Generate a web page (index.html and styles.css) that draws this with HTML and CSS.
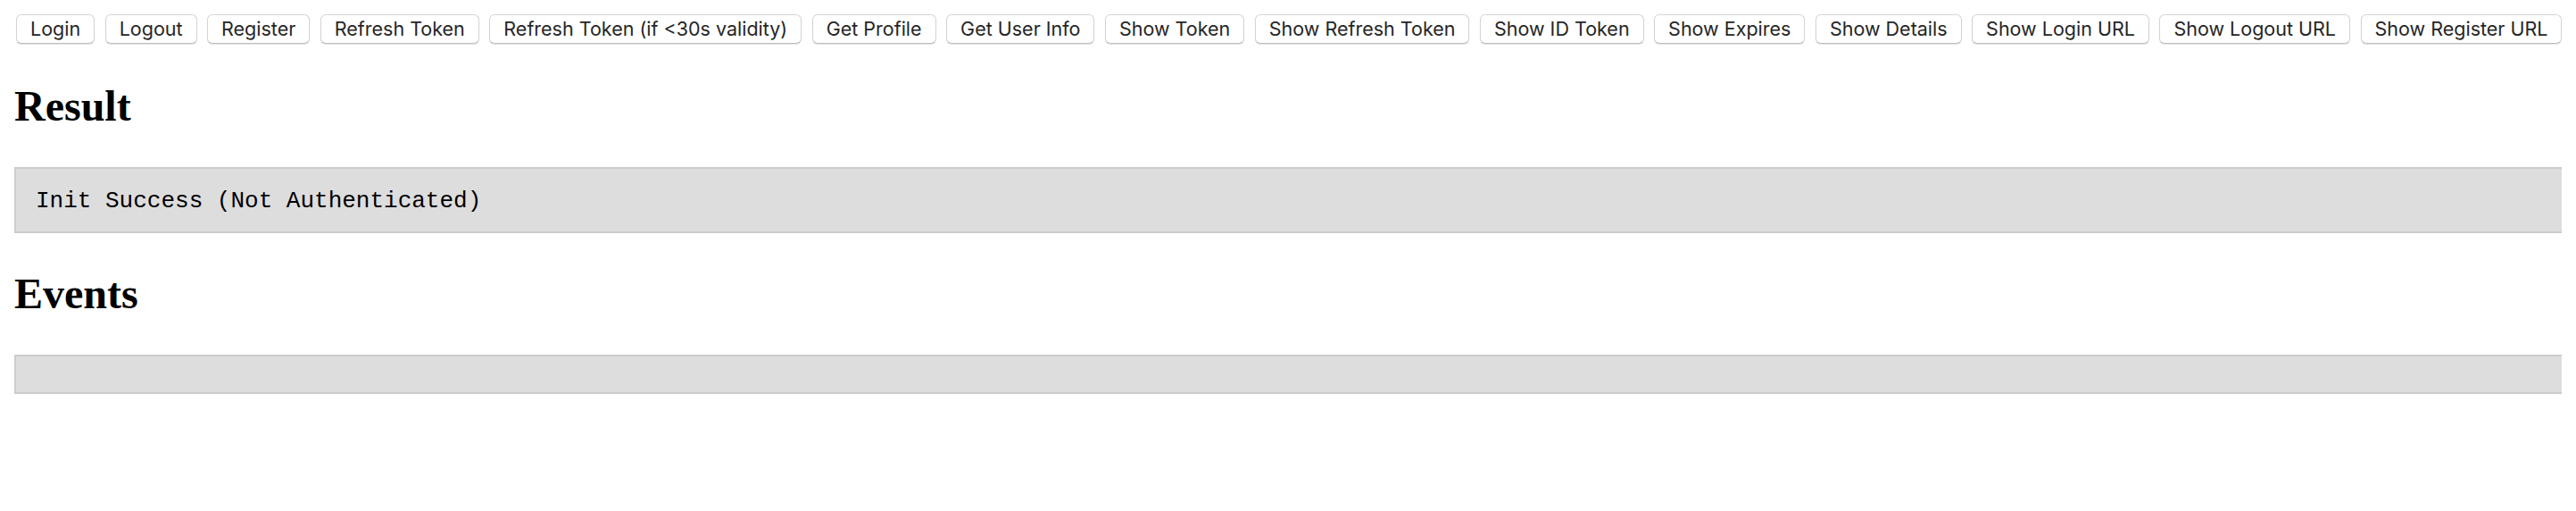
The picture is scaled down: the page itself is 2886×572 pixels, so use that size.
FILE: index.html
```html
<!DOCTYPE html>
<html lang="en">
<head>
<meta charset="utf-8">
<title>Keycloak Test</title>
<link rel="stylesheet" href="styles.css">
</head>
<body>
<div class="toolbar">
  <button class="btn">Login</button>
  <button class="btn">Logout</button>
  <button class="btn">Register</button>
  <button class="btn">Refresh Token</button>
  <button class="btn">Refresh Token (if &lt;30s validity)</button>
  <button class="btn">Get Profile</button>
  <button class="btn">Get User Info</button>
  <button class="btn">Show Token</button>
  <button class="btn">Show Refresh Token</button>
  <button class="btn">Show ID Token</button>
  <button class="btn">Show Expires</button>
  <button class="btn">Show Details</button>
  <button class="btn">Show Login URL</button>
  <button class="btn">Show Logout URL</button>
  <button class="btn">Show Register URL</button>
</div>

<h1 class="section-title">Result</h1>
<pre class="output">Init Success (Not Authenticated)</pre>

<h1 class="section-title">Events</h1>
<pre class="output"></pre>
</body>
</html>
```
FILE: styles.css
```css
html {
  background: #fff;
  overflow: hidden;
  scrollbar-width: none;
}

body {
  margin: 16px;
  color: #000;
  font-family: "Liberation Serif", "Times New Roman", serif;
}

.toolbar {
  display: flex;
  flex-wrap: nowrap;
  gap: 11.5px;
  padding-left: 2px;
  margin-bottom: 42px;
}

.btn {
  flex: none;
  height: 33px;
  padding: 0 15px;
  margin: 0;
  font-family: Inter, "Noto Sans", sans-serif;
  font-size: 21.5px;
  color: #262626;
  background: #fff;
  border: 1px solid #d4d4d4;
  border-bottom-color: #bdbdbd;
  border-radius: 6px;
  box-shadow: 0 1px 1px rgba(0, 0, 0, 0.12);
  white-space: nowrap;
  line-height: 31px;
}

.section-title {
  margin: 40px 0;
  font-family: "Liberation Serif", "Times New Roman", serif;
  font-weight: bold;
  font-size: 48px;
  line-height: 56px;
}

.output {
  margin: 40px -16px 40px 0;
  padding: 22px 22px 18px 22px;
  background: #ddd;
  border: 2px solid #ccc;
  border-right-width: 0;
  font-family: "Liberation Mono", "Courier New", monospace;
  font-size: 26px;
  line-height: 29.5px;
  color: #000;
}
```
